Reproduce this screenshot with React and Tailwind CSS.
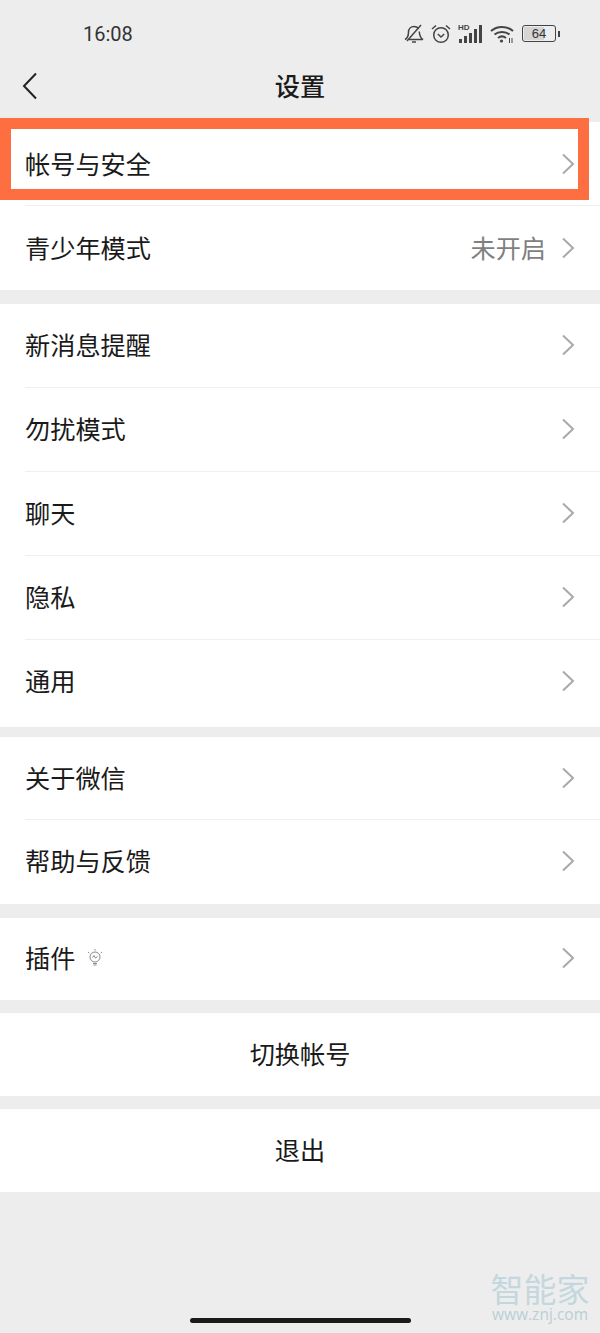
const cjk = "font-['Noto_Sans_CJK_SC','Noto_Sans',sans-serif]";

function Chevron() {
  return (
    <svg width="14" height="22" viewBox="0 0 14 22" fill="none" className="shrink-0">
      <path d="M2 1.5 L12 11 L2 20.5" stroke="#a9a9a9" strokeWidth="2" />
    </svg>
  );
}

function Row({ label, value, icon, divider, heightClass = 'h-[84px]', padClass = 'pb-[2px]' }) {
  return (
    <div className={`relative flex items-center bg-white pl-[25px] pr-[25px] ${heightClass} ${padClass}`}>
      <span className="text-[25.2px] leading-none text-[#1a1a1a]">{label}</span>
      {icon}
      <div className="ml-auto flex items-center gap-[15px]">
        {value && <span className="text-[25.2px] leading-none text-[#7f7f7f]">{value}</span>}
        <Chevron />
      </div>
      {divider && <div className="absolute bottom-0 left-[25px] right-0 h-px bg-[#efefef]" />}
    </div>
  );
}

function CenterRow({ label }) {
  return (
    <div className="flex h-[83px] items-center justify-center bg-white pb-[2px]">
      <span className="text-[25.2px] leading-none text-[#1a1a1a]">{label}</span>
    </div>
  );
}

function StatusIcons() {
  return (
    <div className="flex items-center gap-[7px]">
      {/* muted bell */}
      <svg width="20" height="20" viewBox="0 0 20 20" fill="none" stroke="#444" strokeWidth="1.5">
        <path d="M1 15.5 C4 14 4.5 11 4.5 8 C4.5 4.5 7 2.5 10 2.5 C12 2.5 13.5 3.3 14.5 4.6 M15.2 7.5 C15.5 10.5 16 14 19 15.5 L5 15.5" />
        <path d="M8 18 L12 18" />
        <path d="M3 17 L17 1" />
      </svg>
      {/* alarm */}
      <svg width="20" height="20" viewBox="0 0 20 20" fill="none" stroke="#444" strokeWidth="1.5">
        <circle cx="10" cy="11" r="7.3" />
        <path d="M6.8 10 L10 13 L13.2 10" />
        <path d="M1 5 L5 1.5 M19 5 L15 1.5" />
      </svg>
      {/* HD + signal */}
      <div className="relative h-[20px] w-[24px]">
        <span className="absolute -top-[1px] left-0 font-['Liberation_Sans',sans-serif] text-[8px] font-bold leading-[10px] text-[#444]">HD</span>
        <svg width="24" height="20" viewBox="0 0 24 20" fill="#444" className="absolute left-0 top-0">
          <rect x="1" y="15" width="3" height="4" />
          <rect x="6" y="12" width="3" height="7" />
          <rect x="11" y="9" width="3" height="10" />
          <rect x="16" y="5" width="3" height="14" />
          <rect x="21" y="1" width="3" height="18" />
        </svg>
      </div>
      {/* wifi */}
      <svg width="24" height="20" viewBox="0 0 24 20" fill="none" stroke="#444" strokeWidth="2" className="ml-[1px]">
        <path d="M1 7 C7 1.5 17 1.5 23 7" />
        <path d="M4.5 10.5 C8.5 7 15.5 7 19.5 10.5" />
        <path d="M8 14 C10.5 12 13.5 12 16 14" />
        <circle cx="11.5" cy="17" r="1.6" fill="#444" stroke="none" />
        <path d="M19.5 14 V19 M22 14 V19" strokeWidth="1" />
      </svg>
      {/* battery */}
      <div className="ml-[1px] flex items-center">
        <div className="relative flex h-[17px] w-[34px] items-center justify-center overflow-hidden rounded-[3px] border-[1.5px] border-[#444]">
          <div className="absolute inset-y-[1px] left-[1px] w-[20px] bg-[#d5d5d5]" />
          <span className="relative font-['Liberation_Sans',sans-serif] text-[13px] leading-none text-[#333]">64</span>
        </div>
        <div className="ml-[2px] h-[6px] w-[2px] bg-[#444]" />
      </div>
    </div>
  );
}

function BulbIcon() {
  return (
    <svg width="16" height="20" viewBox="0 0 16 20" fill="none" stroke="#8a8a8a" strokeWidth="1" className="ml-[12px]">
      <circle cx="8" cy="9" r="5" />
      <path d="M5.5 9.5 L7 7.5 L8.5 10 L10.5 8.5" />
      <path d="M6 15.5 H10 M6.5 17 H9.5" />
      <path d="M8 1 V2.5 M1 4 L2.2 5 M15 4 L13.8 5" />
    </svg>
  );
}

export default function App() {
  return (
    <div className={`relative h-[1333px] w-[600px] overflow-hidden bg-[#ededed] ${cjk}`}>
      {/* status bar */}
      <div className="flex h-[66px] items-center pl-[83px] pr-[40px] pt-[1px]">
        <span className="font-['Roboto',sans-serif] text-[20px] leading-none text-[#333]">16:08</span>
        <div className="ml-auto">
          <StatusIcons />
        </div>
      </div>

      {/* nav */}
      <div className="relative flex h-[56px] items-center justify-center pb-[16px]">
        <svg width="16" height="28" viewBox="0 0 16 28" fill="none" className="absolute left-[22px] top-[6px]">
          <path d="M14 1.5 L2 14 L14 26.5" stroke="#222" strokeWidth="2" />
        </svg>
        <span className="text-[25.2px] font-medium leading-none text-[#1a1a1a]">设置</span>
      </div>

      <Row label="帐号与安全" divider padClass="pb-0" />
      <Row label="青少年模式" value="未开启" padClass="pb-0" />

      <div className="h-[14px]" />
      <Row label="新消息提醒" divider />
      <Row label="勿扰模式" divider />
      <Row label="聊天" divider />
      <Row label="隐私" divider />
      <Row label="通用" heightClass="h-[87px]" padClass="pb-[6px]" />

      <div className="h-[10px]" />
      <Row label="关于微信" heightClass="h-[83px]" divider />
      <Row label="帮助与反馈" />

      <div className="h-[14px]" />
      <Row label="插件" icon={<BulbIcon />} heightClass="h-[82px]" />

      <div className="h-[13px]" />
      <CenterRow label="切换帐号" />

      <div className="h-[13px]" />
      <CenterRow label="退出" />

      {/* highlight box */}
      <div className="absolute left-0 top-[118px] h-[82px] w-[589px] border-[11px] border-[#fd6e40]" />

      {/* watermark */}
      <div className="absolute left-[480px] top-[1271px] flex w-[120px] flex-col items-center">
        <span className="text-[33px] leading-[34px] text-[#c3d8de]">智能家</span>
        <span className="font-['Open_Sans',sans-serif] text-[15.5px] leading-[18px] text-[#b9cfd6]">www.znj.com</span>
      </div>

      {/* home indicator */}
      <div className="absolute left-[190px] top-[1318px] h-[5px] w-[221px] rounded-full bg-[#1a1a1a]" />
    </div>
  );
}
